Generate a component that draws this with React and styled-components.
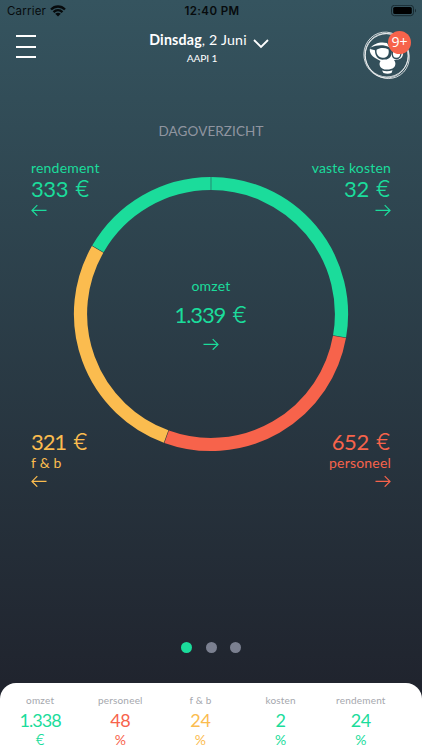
import React, { useState } from "react";
import styled, { createGlobalStyle } from "styled-components";

const GREEN = "#1bdc9b";
const RED = "#f7634b";
const YELLOW = "#fbbc4f";

const GlobalStyle = createGlobalStyle`
    body {
        margin: 0;
        background: #20242e;
    }

    * {
        box-sizing: border-box;
    }
`;

const Screen = styled.div`
    display: flex;
    flex-direction: column;
    width: 422px;
    height: 750px;
    overflow: hidden;
    background: linear-gradient(180deg, #35545f 0%, #20242e 91%);
    font-family: Lato, "Open Sans", sans-serif;
`;

const StatusBar = styled.div`
    display: grid;
    grid-template-columns: 1fr auto 1fr;
    align-items: center;
    height: 22px;
    padding: 0 5px 0 7px;
    color: #070b0d;
    font-family: Inter, sans-serif;
    font-size: 11.5px;
    letter-spacing: 0.2px;
`;

const Carrier = styled.div`
    display: flex;
    align-items: center;
    gap: 4px;
`;

const Clock = styled.div`
    font-weight: 600;
    font-size: 11.5px;
    letter-spacing: 0.4px;
`;

const Battery = styled.svg`
    justify-self: end;
`;

const Header = styled.header`
    display: grid;
    grid-template-columns: 60px 1fr 60px;
    height: 62px;
    padding: 0 10px 0 16px;
`;

const MenuButton = styled.button`
    display: flex;
    flex-direction: column;
    gap: 8.5px;
    align-self: start;
    width: 20px;
    margin-top: 13px;
    padding: 0;
    border: none;
    background: none;
    cursor: pointer;
`;

const MenuLine = styled.span`
    height: 2px;
    background: #ffffff;
`;

const DateBlock = styled.div`
    display: flex;
    flex-direction: column;
    align-items: center;
    padding: 8px 10px 0 0;
    color: #ffffff;
`;

const DateLine = styled.div`
    display: flex;
    align-items: center;
    gap: 6px;
    height: 20px;
    font-size: 14.2px;
    line-height: 20px;
    white-space: pre;
    letter-spacing: 0.2px;

    svg {
        margin-top: 8px;
    }
`;

const Location = styled.div`
    margin-right: 14px;
    padding-top: 1px;
    font-size: 10.3px;
    line-height: 15px;
    letter-spacing: -0.2px;
`;

const Avatar = styled.div`
    position: relative;
    justify-self: end;
    width: 50px;
    height: 50px;
    margin-top: 8px;
`;

const Badge = styled.span`
    position: absolute;
    top: 1px;
    right: 1px;
    width: 23px;
    height: 23px;
    border-radius: 50%;
    background: ${RED};
    color: #ffffff;
    font-family: "Open Sans", sans-serif;
    font-size: 14px;
    line-height: 22px;
    text-align: center;
`;

const Overview = styled.main`
    display: flex;
    flex-direction: column;
    flex: 1;
`;

const Title = styled.h1`
    height: 20px;
    margin: 37px 0 0;
    color: #9095a0;
    font-size: 13.5px;
    font-weight: 400;
    line-height: 20px;
    letter-spacing: 0.1px;
    text-align: center;
`;

const Board = styled.section`
    display: grid;
    grid-template-columns: 1fr 1fr;
    grid-template-rows: 1fr auto;
    height: 329px;
    margin-top: 17px;
    padding: 0 31px;
`;

const Figure = styled.div`
    grid-area: ${(props) => props.$area};
    display: flex;
    flex-direction: column;
    align-items: ${(props) => (props.$right ? "flex-end" : "flex-start")};
    color: ${(props) => props.$color};
`;

const Label = styled.div`
    height: 20px;
    font-size: 14px;
    line-height: 20px;
    letter-spacing: 0.2px;
`;

const AmountText = styled.div`
    display: flex;
    gap: 7px;
    height: 22px;
    font-size: 22px;
    line-height: 22px;
    letter-spacing: ${(props) => (props.$tight ? "-1.1px" : "-0.4px")};
`;

const Currency = styled.span`
    font-family: Inter, sans-serif;
    font-size: 22.5px;
    font-weight: 300;
    letter-spacing: 0;
`;

const ArrowIcon = styled.svg`
    margin-top: ${(props) => props.$gap || "2px"};
    transform: ${(props) => (props.$left ? "scaleX(-1)" : "none")};
`;

const RingHolder = styled.div`
    grid-area: 1 / 1 / 3 / 3;
    display: grid;
    place-items: center;
    align-self: start;
    justify-self: center;
    margin-top: 18px;
    width: 276px;
    height: 276px;

    > * {
        grid-area: 1 / 1;
    }
`;

const Center = styled.div`
    display: flex;
    flex-direction: column;
    align-items: center;
    gap: 8px;
    padding-bottom: 3px;
    color: ${GREEN};
`;

const Dots = styled.nav`
    display: flex;
    justify-content: center;
    gap: 13.5px;
    margin-top: 155px;
`;

const Dot = styled.button`
    width: 11px;
    height: 11px;
    padding: 0;
    border: none;
    border-radius: 50%;
    background: ${(props) => (props.$active ? GREEN : "#7b8090")};
    cursor: pointer;
`;

const Summary = styled.footer`
    display: grid;
    grid-template-columns: repeat(5, 80.2px);
    height: 67px;
    border-radius: 16px 16px 0 0;
    background: #ffffff;
`;

const SummaryItem = styled.div`
    display: flex;
    flex-direction: column;
    align-items: center;
    padding-top: 10px;
    color: ${(props) => props.$color};
`;

const SummaryLabel = styled.div`
    color: #a5a7ad;
    font-size: 10px;
    line-height: 14px;
    letter-spacing: 0.2px;
`;

const SummaryValue = styled.div`
    font-size: 18px;
    line-height: 26px;
    letter-spacing: ${(props) => (props.$long ? "-1px" : "-0.3px")};
`;

const SummaryUnit = styled.div`
    font-family: ${(props) => (props.$euro ? "Inter, sans-serif" : "inherit")};
    font-size: 14px;
    font-weight: ${(props) => (props.$euro ? 300 : 400)};
    line-height: 14px;
`;

const segments = [
    { from: 0, to: 100, color: GREEN },
    { from: 100, to: 200, color: RED },
    { from: 200, to: 299.8, color: YELLOW },
    { from: 299.8, to: 360, color: GREEN },
];

const summary = [
    { label: "omzet", value: "1.338", unit: "€", color: GREEN },
    { label: "personeel", value: "48", unit: "%", color: RED },
    { label: "f & b", value: "24", unit: "%", color: YELLOW },
    { label: "kosten", value: "2", unit: "%", color: GREEN },
    { label: "rendement", value: "24", unit: "%", color: GREEN },
];

const point = (angle, radius) => {
    const rad = ((angle - 90) * Math.PI) / 180;
    return `${138 + radius * Math.cos(rad)} ${138 + radius * Math.sin(rad)}`;
};

const Amount = ({ children }) => (
    <AmountText $tight={children.includes("1")}>
        <span>{children}</span>
        <Currency>€</Currency>
    </AmountText>
);

const Arrow = ({ left, gap }) => (
    <ArrowIcon $left={left} $gap={gap} width="16" height="12" viewBox="0 0 16 12" fill="none" stroke="currentColor" strokeWidth="1.2">
        <path d="M0.5 6.4H15M9.7 1.1L15 6.4L9.7 11.7" />
    </ArrowIcon>
);

const Ring = () => (
    <svg width="276" height="276" viewBox="0 0 276 276" fill="none">
        {segments.map((s) => (
            <path
                key={s.from}
                d={`M${point(s.from + 0.12, 130.5)}A130.5 130.5 0 0 1 ${point(s.to - 0.12, 130.5)}`}
                stroke={s.color}
                strokeWidth="13.2"
            />
        ))}
    </svg>
);

const Monkey = () => (
    <svg width="50" height="50" viewBox="0 0 50 50" fill="none">
        <g stroke="#ffffff" strokeWidth="0.7">
            <ellipse cx="24.8" cy="25.3" rx="21.6" ry="21.6" />
            <ellipse cx="25.2" cy="26" rx="21.6" ry="23" transform="rotate(-35 25.2 26)" />
            <ellipse cx="24" cy="25" rx="23" ry="22" transform="rotate(70 24 25)" />
        </g>
        <path fill="#ffffff" d="M8 18.5C12 13 19 11.5 25 13L28 18.5L38 21L41 23C41 27 39 29.5 35 29.5L32 30C34.5 33 33.5 37 30.5 38.5L27 39.5H22.5C17.5 38 16.5 34 18.5 31L14 28.5C9.5 26 7 22 8 18.5Z" />
        <path fill="#2f4c58" d="M8.5 17.5C15 15 21 14.2 27 17L37 19L39 21L30 20.5C30 25.5 28 29.8 22.5 29.6C16.5 30.5 12.8 26 13 20.2L8 19Z" />
        <path fill="#ffffff" d="M14.6 19.8C18 17.6 22.5 17.6 26.5 19.4C27.5 24 25.5 27.8 20.5 27.8C16.5 27.5 13.8 24 14.6 19.8Z" />
        <path stroke="#2f4c58" strokeWidth="1.3" d="M30.5 21C29.5 26 31 28.5 34.5 28.5C37.5 28.5 39 26 39 22.5" />
        <path fill="#ffffff" d="M20 40.6Q25.5 42 30.5 40.3L29.5 43Q25.5 44.5 21.5 42.9Z" />
    </svg>
);

const App = () => {
    const [page, setPage] = useState(0);

    return (
        <Screen>
            <GlobalStyle />
            <StatusBar>
                <Carrier>
                    Carrier
                    <svg width="16" height="12" viewBox="0 0 16 12" fill="none" stroke="currentColor" strokeWidth="2.3">
                        <path d="M1 4.5C5 .5 11 .5 15 4.5M3.5 7.1C6.2 4.6 9.8 4.6 12.5 7.1" />
                        <path fill="currentColor" stroke="none" d="M5.2 8.8Q8 6.7 10.8 8.8L8 11.5Z" />
                    </svg>
                </Carrier>
                <Clock>12:40 PM</Clock>
                <Battery width="26" height="12" viewBox="0 0 26 12">
                    <rect x="0.5" y="0.3" width="22" height="10.4" rx="3" fill="none" stroke="#182a31" />
                    <rect x="2.2" y="1.9" width="18.6" height="7.2" rx="1.6" fill="#000000" />
                    <path d="M24 3.7C25.3 4.2 25.3 7 24 7.5Z" fill="#182a31" />
                </Battery>
            </StatusBar>
            <Header>
                <MenuButton aria-label="Menu">
                    <MenuLine />
                    <MenuLine />
                    <MenuLine />
                </MenuButton>
                <DateBlock>
                    <DateLine>
                        <span><b>Dinsdag</b>, 2 Juni</span>
                        <svg width="16" height="10" viewBox="0 0 16 10" fill="none" stroke="#ffffff" strokeWidth="1.8">
                            <path d="M1 1L8 8L15 1" />
                        </svg>
                    </DateLine>
                    <Location>AAPI 1</Location>
                </DateBlock>
                <Avatar>
                    <Monkey />
                    <Badge>9+</Badge>
                </Avatar>
            </Header>
            <Overview>
                <Title>DAGOVERZICHT</Title>
                <Board>
                    <RingHolder>
                        <Ring />
                        <Center>
                            <Label>omzet</Label>
                            <Amount>1.339</Amount>
                            <Arrow gap="4px" />
                        </Center>
                    </RingHolder>
                    <Figure $area="1 / 1" $color={GREEN}>
                        <Label>rendement</Label>
                        <Amount>333</Amount>
                        <Arrow left gap="4px" />
                    </Figure>
                    <Figure $area="1 / 2" $color={GREEN} $right>
                        <Label>vaste kosten</Label>
                        <Amount>32</Amount>
                        <Arrow gap="4px" />
                    </Figure>
                    <Figure $area="2 / 1" $color={YELLOW}>
                        <Amount>321</Amount>
                        <Label>f &amp; b</Label>
                        <Arrow left />
                    </Figure>
                    <Figure $area="2 / 2" $color={RED} $right>
                        <Amount>652</Amount>
                        <Label>personeel</Label>
                        <Arrow />
                    </Figure>
                </Board>
                <Dots>
                    {[0, 1, 2].map((i) => (
                        <Dot key={i} $active={i === page} onClick={() => setPage(i)} aria-label={`Pagina ${i + 1}`} />
                    ))}
                </Dots>
            </Overview>
            <Summary>
                {summary.map((item) => (
                    <SummaryItem key={item.label} $color={item.color}>
                        <SummaryLabel>{item.label}</SummaryLabel>
                        <SummaryValue $long={item.value.length > 2}>{item.value}</SummaryValue>
                        <SummaryUnit $euro={item.unit === "€"}>{item.unit}</SummaryUnit>
                    </SummaryItem>
                ))}
            </Summary>
        </Screen>
    );
};

export default App;
